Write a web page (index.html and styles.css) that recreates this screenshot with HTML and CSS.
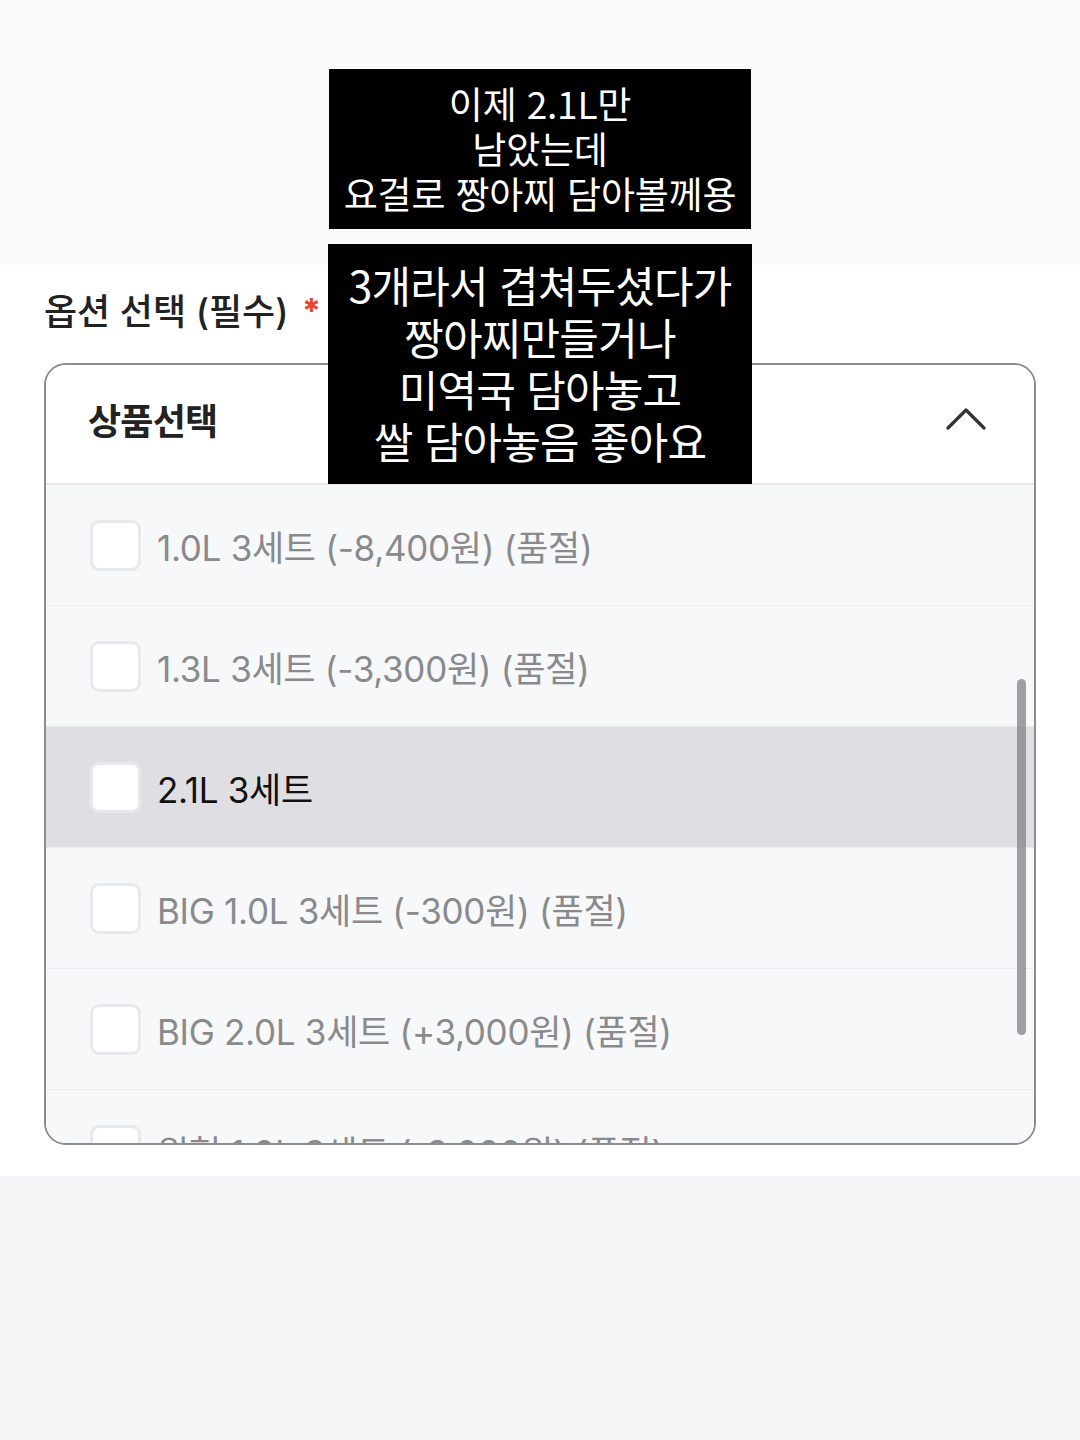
FILE: index.html
```html
<!DOCTYPE html>
<html lang="ko">
<head>
    <meta charset="UTF-8">
    <meta name="viewport" content="width=device-width, initial-scale=1.0">
    <title>옵션 선택</title>
    <link rel="stylesheet" href="styles.css">
</head>
<body>

    <div class="top-band"></div>

    <div class="option-section">
        <div class="option-label">옵션 선택 (필수) <span class="required">*</span></div>

        <div class="select-box">
            <div class="select-head">
                <span class="select-title">상품선택</span>
                <svg class="chevron" width="40" height="24" viewBox="0 0 40 24">
                    <polyline points="2,21 20,3 38,21" fill="none" stroke="#333" stroke-width="3.2" stroke-linecap="round" stroke-linejoin="round"/>
                </svg>
            </div>

            <ul class="option-list">
                <li class="option-row soldout"><span class="check"></span>1.0L 3세트 (-8,400원) (품절)</li>
                <li class="option-row soldout"><span class="check"></span>1.3L 3세트 (-3,300원) (품절)</li>
                <li class="option-row active"><span class="check"></span>2.1L 3세트</li>
                <li class="option-row soldout"><span class="check"></span>BIG 1.0L 3세트 (-300원) (품절)</li>
                <li class="option-row soldout"><span class="check"></span>BIG 2.0L 3세트 (+3,000원) (품절)</li>
                <li class="option-row soldout"><span class="check"></span>원형 1.0L 3세트 (-3,000원) (품절)</li>
            </ul>
            <div class="scrollbar"></div>
        </div>
    </div>

    <div class="bottom-band"></div>

    <!-- 캡션 (스크린샷 위에 덮인 자막) -->
    <div class="caption caption1">이제 2.1L만<br>남았는데<br>요걸로 짱아찌 담아볼께용</div>
    <div class="caption caption2">3개라서 겹쳐두셨다가<br>짱아찌만들거나<br>미역국 담아놓고<br>쌀 담아놓음 좋아요</div>

</body>
</html>
```

FILE: styles.css
```css
body{
    margin:0;
    background-color:#ffffff;
    font-family:Inter, "Noto Sans CJK KR", sans-serif;
    color:#222;
    position:relative;
}

.top-band{
    height:265px;
    background-color:#f9f9fa;
}

.option-section{
    padding:23px 44px 31px 44px;
}

.option-label{
    font-size:36px;
    line-height:48px;
    font-weight:500;
    color:#222;
    letter-spacing:0;
}

.required{
    color:#e8432d;
    font-size:34px;
    font-weight:700;
    margin-left:4px;
    position:relative;
    top:-2px;
}

.select-box{
    margin-top:26px;
    height:782px;
    box-sizing:border-box;
    border:2px solid #8c8c8c;
    border-radius:22px;
    overflow:hidden;
    position:relative;
}

.select-head{
    height:120px;
    box-sizing:border-box;
    border-bottom:2px solid #e8e8ea;
    display:flex;
    align-items:center;
    justify-content:space-between;
    padding:0 48px 10px 42px;
    background-color:#fff;
}

.select-title{
    font-size:36px;
    font-weight:700;
    color:#222;
    letter-spacing:-0.8px;
}

.option-list{
    list-style:none;
    margin:0;
    padding:0;
    background-color:#f7f8fa;
}

.option-row{
    height:121px;
    box-sizing:border-box;
    border-bottom:1px solid #ebecef;
    display:flex;
    align-items:center;
    padding-left:44px;
    font-size:35px;
    letter-spacing:-0.3px;
    color:#8a8a8c;
}

.option-row.active{
    background-color:#dfdfe3;
    color:#111;
}

.check{
    width:51px;
    height:51px;
    box-sizing:border-box;
    border:3px solid #e8e9ec;
    border-radius:9px;
    background-color:#fff;
    margin-right:16px;
    flex-shrink:0;
}

.scrollbar{
    position:absolute;
    right:8px;
    top:314px;
    width:9px;
    height:356px;
    border-radius:5px;
    background-color:rgba(130,130,135,0.75);
}

.bottom-band{
    height:265px;
    background-color:#f5f5f7;
}

.caption{
    position:absolute;
    background-color:#000;
    color:#fff;
    text-align:center;
    box-sizing:border-box;
    font-family:"Noto Sans CJK KR", sans-serif;
    font-weight:400;
}

.caption1{
    left:329px;
    top:69px;
    width:422px;
    height:160px;
    font-size:37px;
    line-height:45px;
    padding-top:12px;
    letter-spacing:-0.2px;
}

.caption2{
    left:328px;
    top:244px;
    width:424px;
    height:240px;
    font-size:43px;
    line-height:52px;
    padding-top:14px;
    letter-spacing:-0.8px;
}
```
